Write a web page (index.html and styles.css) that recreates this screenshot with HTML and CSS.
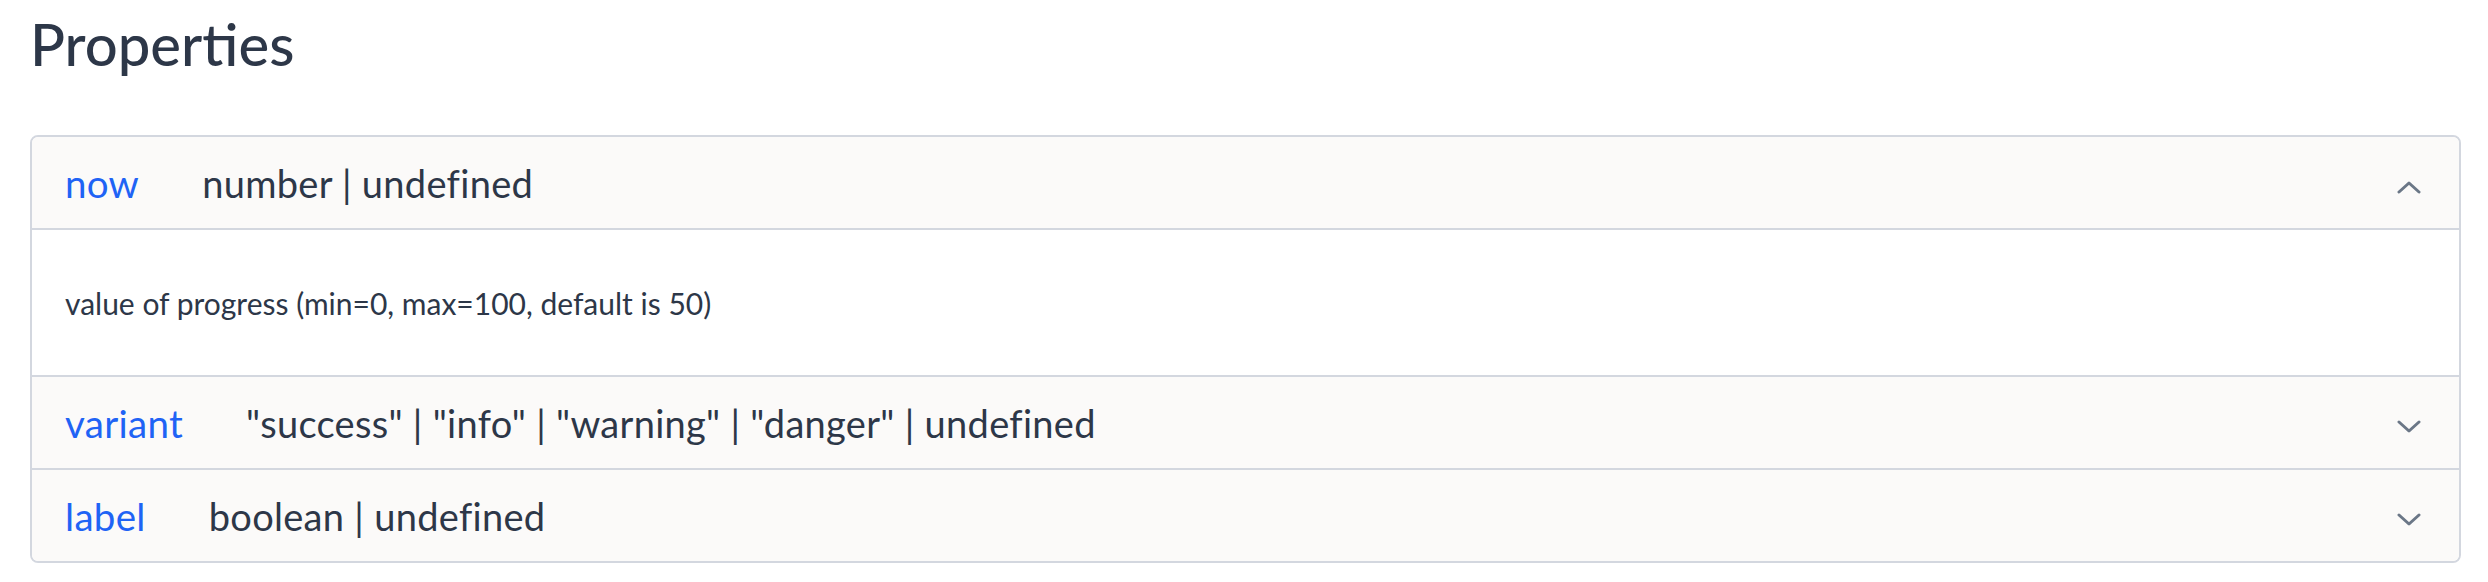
FILE: index.html
```html
<!DOCTYPE html>
<html>
<head>
<meta charset="utf-8">
<link rel="stylesheet" href="styles.css">
</head>
<body>
<main class="page">
  <h2 class="title">Properties</h2>
  <div class="props">
    <div class="prop open">
      <div class="prop-head">
        <span class="prop-name">now</span>
        <span class="prop-type">number | undefined</span>
        <svg class="chev" width="24" height="14" viewBox="0 0 24 14"><path d="M2 12 L12 3 L22 12" fill="none" stroke="#6b7787" stroke-width="3" stroke-linecap="round" stroke-linejoin="round"/></svg>
      </div>
      <div class="prop-body">value of progress (min=0, max=100, default is 50)</div>
    </div>
    <div class="prop">
      <div class="prop-head">
        <span class="prop-name">variant</span>
        <span class="prop-type">"success" | "info" | "warning" | "danger" | undefined</span>
        <svg class="chev" width="24" height="14" viewBox="0 0 24 14"><path d="M2 2 L12 11 L22 2" fill="none" stroke="#6b7787" stroke-width="3" stroke-linecap="round" stroke-linejoin="round"/></svg>
      </div>
    </div>
    <div class="prop">
      <div class="prop-head">
        <span class="prop-name">label</span>
        <span class="prop-type">boolean | undefined</span>
        <svg class="chev" width="24" height="14" viewBox="0 0 24 14"><path d="M2 2 L12 11 L22 2" fill="none" stroke="#6b7787" stroke-width="3" stroke-linecap="round" stroke-linejoin="round"/></svg>
      </div>
    </div>
  </div>
</main>
</body>
</html>
```
FILE: styles.css
```css
html, body {
  margin: 0;
  padding: 0;
  background: #ffffff;
}
.page {
  padding: 0 27px 0 30px;
  font-family: "Lato", "Noto Sans", sans-serif;
  color: #2d3748;
}
.title {
  margin: 0;
  padding-top: 9px;
  font-size: 58px;
  line-height: 70px;
  font-weight: 500;
  color: #2d3748;
  height: 135px;
  box-sizing: border-box;
}
.props {
  border: 2px solid #d3d7df;
  border-radius: 8px;
  overflow: hidden;
}
.prop + .prop {
  border-top: 2px solid #d3d7df;
}
.prop-head {
  display: flex;
  align-items: center;
  height: 91px;
  padding: 0 38px 0 33px;
  background: #fbfaf9;
  font-size: 38px;
}
.prop-name {
  color: #1f63f5;
  font-size: 38.5px;
  letter-spacing: 0.3px;
  margin-right: 63px;
}
.prop-type {
  flex: 1;
  color: #2d3748;
  letter-spacing: 0.3px;
}
.chev {
  flex: none;
  margin-top: 8px;
}
.prop-body {
  border-top: 2px solid #d3d7df;
  background: #ffffff;
  height: 145px;
  padding: 0 33px;
  display: flex;
  align-items: center;
  font-size: 30px;
}
```
